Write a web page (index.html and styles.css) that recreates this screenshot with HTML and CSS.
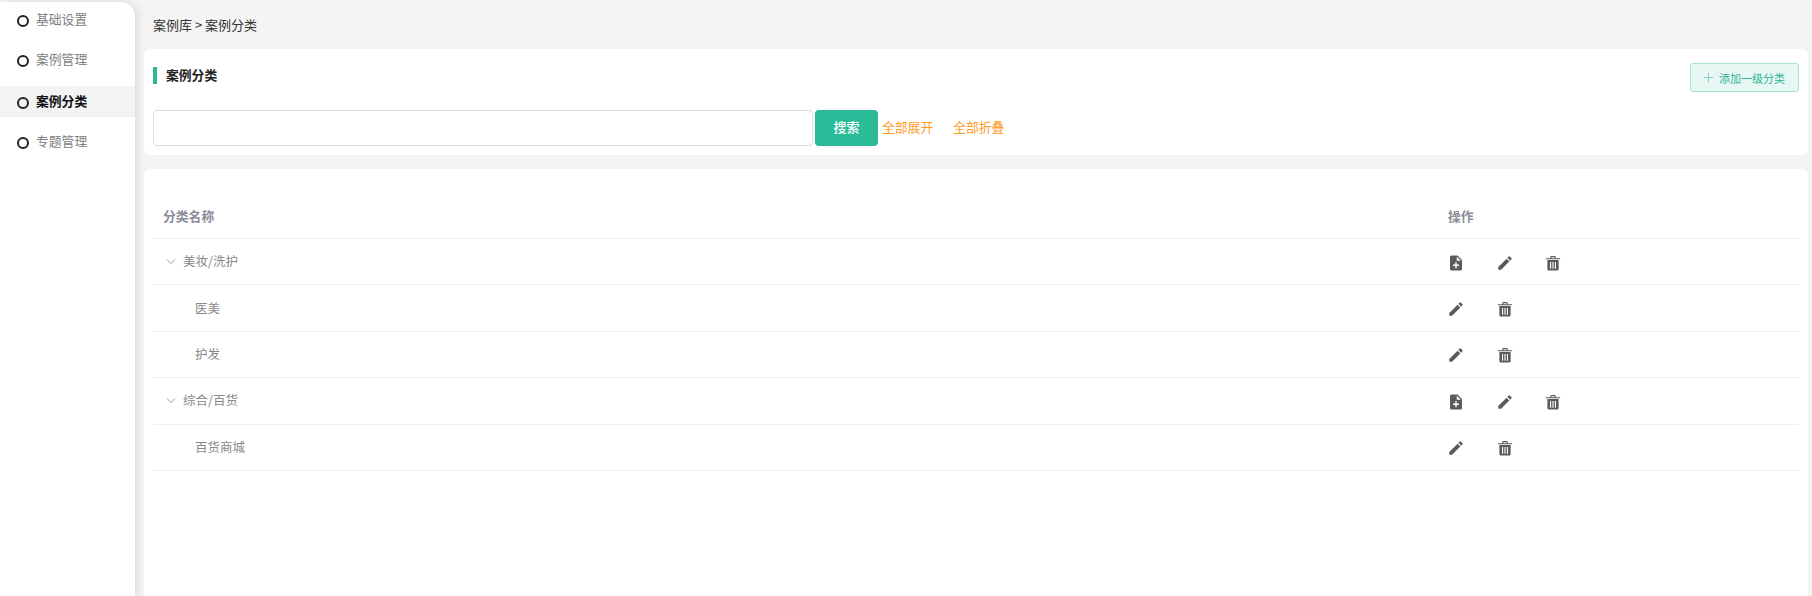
FILE: index.html
```html
<!DOCTYPE html>
<html lang="zh-CN">
<head>
<meta charset="utf-8">
<title>案例分类</title>
<link rel="stylesheet" href="styles.css">
</head>
<body>
<svg class="defs" width="0" height="0" aria-hidden="true">
  <symbol id="i-add" viewBox="0 0 24 24"><path d="M14 2H6a2 2 0 0 0-2 2v16a2 2 0 0 0 2 2h12a2 2 0 0 0 2-2V8l-6-6zm2 14h-3v3h-2v-3H8v-2h3v-3h2v3h3v2zm-3-7V3.500L18.500 9H13z"/></symbol>
  <symbol id="i-edit" viewBox="0 0 24 24"><path d="M3 17.250V21h3.750L17.810 9.940l-3.750-3.750L3 17.250zM20.710 7.040a1 1 0 0 0 0-1.410l-2.340-2.340a1 1 0 0 0-1.410 0l-1.830 1.830 3.750 3.750 1.830-1.830z"/></symbol>
  <symbol id="i-del" viewBox="0 0 24 24"><path fill-rule="evenodd" d="M8 5.500 8.500 3.500A1 1 0 0 1 9.500 2.700h5a1 1 0 0 1 1 .8L16 5.500h5.500V7h-19V5.500H8zM9.600 5.500h4.800l-.3-1.300H9.900L9.600 5.500zM4.500 8h15v12a2 2 0 0 1-2 2h-11a2 2 0 0 1-2-2V8zM8 10.500V19.500H9.500V10.500H8zM11.250 10.500V19.500h1.500V10.500h-1.500zM14.500 10.500V19.500H16V10.500h-1.500z"/></symbol>
</svg>
<div class="app">
  <aside class="side">
    <div class="nav nav-1"><span class="dot"></span>基础设置</div>
    <div class="nav nav-2"><span class="dot"></span>案例管理</div>
    <div class="nav nav-3 on"><span class="dot"></span>案例分类</div>
    <div class="nav nav-4"><span class="dot"></span>专题管理</div>
  </aside>
  <main class="main">
    <div class="crumb">案例库 &gt; 案例分类</div>
    <section class="card top">
      <div class="head">
        <h2 class="title"><span class="title-text">案例分类</span></h2>
        <button class="add"><span class="plus"></span>添加一级分类</button>
      </div>
      <div class="search">
        <input class="input" type="text">
        <button class="go">搜索</button>
        <a class="link">全部展开</a>
        <a class="link">全部折叠</a>
      </div>
    </section>
    <section class="card list">
      <div class="row th"><div class="c1">分类名称</div><div class="c2">操作</div></div>
      <div class="row"><div class="c1 l1"><svg class="chev" viewBox="0 0 12 12"><path d="M2 4.500l4 4 4-4"/></svg>美妆/洗护</div>
        <div class="c2"><svg class="ic"><use href="#i-add"/></svg><svg class="ic"><use href="#i-edit"/></svg><svg class="ic"><use href="#i-del"/></svg></div></div>
      <div class="row"><div class="c1 l2">医美</div>
        <div class="c2"><svg class="ic"><use href="#i-edit"/></svg><svg class="ic"><use href="#i-del"/></svg></div></div>
      <div class="row"><div class="c1 l2">护发</div>
        <div class="c2"><svg class="ic"><use href="#i-edit"/></svg><svg class="ic"><use href="#i-del"/></svg></div></div>
      <div class="row"><div class="c1 l1"><svg class="chev" viewBox="0 0 12 12"><path d="M2 4.500l4 4 4-4"/></svg>综合/百货</div>
        <div class="c2"><svg class="ic"><use href="#i-add"/></svg><svg class="ic"><use href="#i-edit"/></svg><svg class="ic"><use href="#i-del"/></svg></div></div>
      <div class="row"><div class="c1 l2">百货商城</div>
        <div class="c2"><svg class="ic"><use href="#i-edit"/></svg><svg class="ic"><use href="#i-del"/></svg></div></div>
    </section>
  </main>
</div>
</body>
</html>
```
FILE: styles.css
```css
* { box-sizing: border-box; }
html, body { margin: 0; height: 100%; overflow: hidden; }
body { background: #f4f4f4; font-family: "Noto Sans CJK SC", "Liberation Sans", sans-serif; font-size: 13px; }
.defs { position: absolute; }
.app { display: flex; height: 596px; padding-top: 2px; }
.side { width: 135px; flex: none; padding-top: 2px; background: #fff; border-top-right-radius: 14px; box-shadow: 2px 0 8px rgba(0,0,0,.12); position: relative; }
.nav { display: flex; align-items: center; color: #808080; height: 31px; padding: 0 0 2px 17px; line-height: 29px; font-size: 12.800px; }
.nav-2 { margin-top: 9px; }
.nav-3 { margin-top: 11px; background: #f3f3f3; color: #111; font-weight: 700; }
.nav-4 { margin-top: 9px; }
.dot { width: 12px; height: 12px; border: 2px solid #222; border-radius: 50%; margin: 4px 7px 0 0; flex: none; }
.main { flex: 1; min-width: 0; padding-left: 9px; padding-right: 4px; }
.crumb { height: 47px; padding: 13px 0 0 9px; line-height: 19px; color: #333; }
.card { background: #fff; border-radius: 6px; }
.top { height: 106px; padding: 14px 9px 0; }
.head { display: flex; justify-content: space-between; align-items: flex-start; height: 47px; }
.title { margin: 4px 0 0; height: 17px; font-size: 12.800px; font-weight: 700; color: #222; border-left: 4px solid #2bbb99; padding-left: 9px; }
.title-text { display: block; line-height: 15px; }
.add { width: 109px; height: 29px; padding: 0; display: flex; align-items: center; justify-content: center; background: #e8f7f3; border: 1px solid #a8e4d5; border-radius: 3px; color: #2bb596; font: inherit; font-size: 11px; }
.plus { width: 9px; height: 9px; margin-right: 6px; background: linear-gradient(#7fd3bf,#7fd3bf) center/9px 1px no-repeat, linear-gradient(#7fd3bf,#7fd3bf) center/1px 9px no-repeat; }
.search { display: flex; align-items: center; height: 36px; font-size: 12.800px; }
.input { width: 660px; height: 36px; border: 1px solid #dcdfe6; border-radius: 4px; background: #fff; margin-right: 2px; }
.go { width: 63px; height: 36px; border: 0; border-radius: 4px; background: #2bbb99; color: #fff; font: inherit; font-size: 13px; font-weight: 500; margin-right: 4px; padding: 0 0 3px; }
.link { color: #ff9a1f; margin-right: 20px; padding-bottom: 4px; }
.list { margin-top: 14px; height: 440px; padding: 23px 9px 0; }
.row { display: flex; align-items: center; height: 46.400px; border-bottom: 1px solid #ebeef5; color: #888; font-size: 12.500px; }
.th { height: 47px; padding-top: 1px; font-size: 12.800px; font-weight: 700; color: #8b8b99; }
.c1 { flex: 1; padding-left: 10px; display: flex; align-items: center; padding-bottom: 2px; }
.c2 { width: 351px; display: flex; align-items: center; padding-top: 2px; }
.th .c1, .th .c2 { padding-top: 0; padding-bottom: 0; }
.l1 { padding-left: 12px; }
.l2 { padding-left: 42px; }
.chev { width: 12px; height: 12px; margin-right: 6px; fill: none; stroke: #999; stroke-width: 1; }
.ic { width: 18px; height: 18px; fill: #5f5a5a; margin-right: 30.500px; }
.ic:first-child { margin-left: -1px; }
```
